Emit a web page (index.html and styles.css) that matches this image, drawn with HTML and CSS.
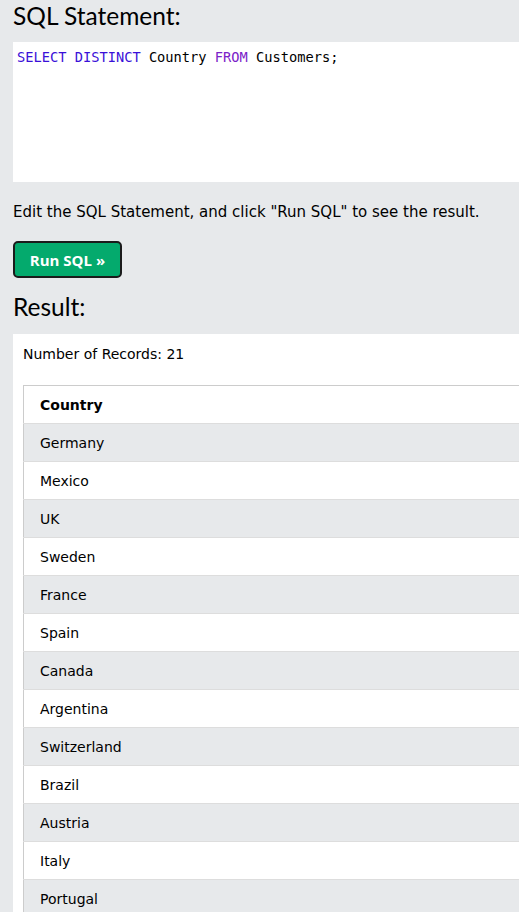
FILE: index.html
```html
<!DOCTYPE html>
<html>
<head>
<meta charset="utf-8">
<link rel="stylesheet" href="styles.css">
</head>
<body>
<div class="page">
  <h2 class="heading">SQL Statement:</h2>
  <div class="code"><span class="kw">SELECT</span> <span class="kw">DISTINCT</span> Country <span class="kw2">FROM</span> Customers;</div>
  <p class="hint">Edit the SQL Statement, and click "Run SQL" to see the result.</p>
  <button class="run">Run SQL »</button>
  <h2 class="heading result-heading">Result:</h2>
  <div class="result">
    <div class="count">Number of Records: 21</div>
    <table class="grid">
      <tr><th>Country</th></tr>
      <tr><td>Germany</td></tr>
      <tr><td>Mexico</td></tr>
      <tr><td>UK</td></tr>
      <tr><td>Sweden</td></tr>
      <tr><td>France</td></tr>
      <tr><td>Spain</td></tr>
      <tr><td>Canada</td></tr>
      <tr><td>Argentina</td></tr>
      <tr><td>Switzerland</td></tr>
      <tr><td>Brazil</td></tr>
      <tr><td>Austria</td></tr>
      <tr><td>Italy</td></tr>
      <tr><td>Portugal</td></tr>
    </table>
  </div>
</div>
</body>
</html>
```
FILE: styles.css
```css
html, body {
  margin: 0;
  padding: 0;
  background: #e7e9eb;
  overflow: hidden;
}
body {
  font-family: "DejaVu Sans", Verdana, sans-serif;
  font-size: 15px;
  color: #000;
}
.page {
  width: 540px;
  padding: 1px 0 0 13px;
  display: flex;
  flex-direction: column;
  align-items: flex-start;
}
.heading {
  font-family: Lato, "Open Sans", sans-serif;
  font-weight: 400;
  font-size: 24.5px;
  line-height: 30px;
  margin: 0;
  color: #000;
}
.code {
  margin-top: 11px;
  width: 100%;
  box-sizing: border-box;
  height: 140px;
  background: #fff;
  padding: 6px 4px;
  font-family: "DejaVu Sans Mono", "Liberation Mono", monospace;
  font-size: 13.7px;
  line-height: 18px;
  white-space: pre;
}
.kw { color: #3a10d8; }
.kw2 { color: #7a22c8; }
.hint {
  margin: 20px 0 0;
  line-height: 20px;
}
.run {
  margin-top: 19px;
  width: 109px;
  height: 37px;
  background: #04aa6d;
  color: #fff;
  border: 2px solid #1b1b1b;
  border-radius: 5px;
  font-family: "Open Sans", "Noto Sans", sans-serif;
  font-weight: 700;
  font-size: 15px;
  padding: 0;
}
.result-heading {
  margin-top: 14px;
}
.result {
  margin-top: 12px;
  width: 100%;
  box-sizing: border-box;
  background: #fff;
  padding: 10px 10px 20px;
}
.count {
  line-height: 20px;
  font-size: 14px;
}
.grid {
  margin-top: 21px;
  width: 100%;
  border-collapse: collapse;
  border: 1px solid #ccc;
  font-size: 14px;
}
.grid th, .grid td {
  text-align: left;
  height: 38px;
  padding: 0 16px;
  border-bottom: 1px solid #ddd;
  box-sizing: border-box;
}
.grid th { font-weight: 700; }
.grid tr:nth-child(even) td { background: #e7e9eb; }
```
